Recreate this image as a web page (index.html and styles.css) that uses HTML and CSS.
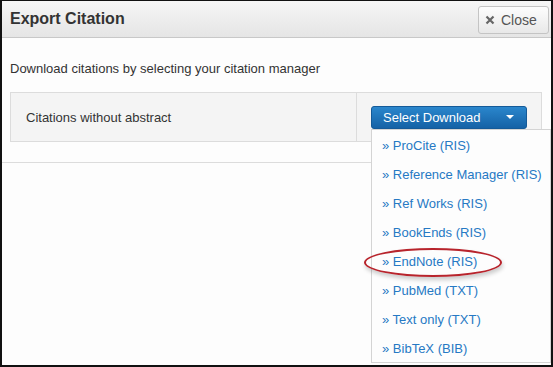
FILE: index.html
```html
<!DOCTYPE html>
<html lang="en">
<head>
    <meta charset="UTF-8">
    <title>Export Citation</title>
    <link rel="stylesheet" href="styles.css">
</head>
<body>
    <div class="modal">
        <div class="modal-header">
            <h3 class="modal-title">Export Citation</h3>
            <button class="close-btn">
                <svg class="close-icon" width="10" height="10" viewBox="0 0 10 10">
                    <path d="M1.5 1.5 L8.5 8.5 M8.5 1.5 L1.5 8.5" stroke="#666" stroke-width="2.2" fill="none"/>
                </svg>
                Close
            </button>
        </div>

        <div class="modal-body">
            <p class="intro">Download citations by selecting your citation manager</p>
            <table class="export-table">
                <tr>
                    <td class="label-cell">Citations without abstract</td>
                    <td class="action-cell">
                        <div class="dropdown">
                            <button class="btn-select">
                                Select Download
                                <span class="caret"></span>
                            </button>
                            <ul class="dropdown-menu">
                                <li><a href="#">&raquo; ProCite (RIS)</a></li>
                                <li><a href="#">&raquo; Reference Manager (RIS)</a></li>
                                <li><a href="#">&raquo; Ref Works (RIS)</a></li>
                                <li><a href="#">&raquo; BookEnds (RIS)</a></li>
                                <li class="highlighted"><a href="#">&raquo; EndNote (RIS)</a></li>
                                <li><a href="#">&raquo; PubMed (TXT)</a></li>
                                <li><a href="#">&raquo; Text only (TXT)</a></li>
                                <li><a href="#">&raquo; BibTeX (BIB)</a></li>
                            </ul>
                        </div>
                    </td>
                </tr>
            </table>
        </div>

        <div class="modal-footer"></div>
    </div>
</body>
</html>
```

FILE: styles.css
```css
* {
    margin: 0;
    padding: 0;
    box-sizing: border-box;
}

body {
    font-family: "Liberation Sans", Arial, sans-serif;
    background-color: #fdfdfd;
    color: #333;
}

.modal {
    width: 553px;
    height: 367px;
    border: 2px solid #111;
    border-top-width: 1px;
    background: #fdfdfd;
    overflow: hidden;
}

.modal-header {
    height: 37px;
    background: linear-gradient(#f6f6f6, #e5e5e5);
    border-bottom: 1px solid #c8c8c8;
    display: flex;
    justify-content: space-between;
    align-items: center;
    padding: 0 2px 0 8px;
}

.modal-title {
    font-size: 16px;
    font-weight: bold;
    color: #333;
}

.close-btn {
    display: flex;
    align-items: center;
    gap: 6px;
    height: 28px;
    width: 71px;
    padding-left: 6px;
    margin-top: 1px;
    font-family: inherit;
    font-size: 14px;
    color: #555;
    background: linear-gradient(#fdfdfd, #e8e8e8);
    border: 1px solid #c4c4c4;
    border-radius: 3px;
}

.modal-body {
    padding: 23px 9px 20px 8px;
}

.intro {
    font-size: 13px;
    line-height: 16px;
    margin-bottom: 15px;
}

.export-table {
    width: 532px;
    border-collapse: collapse;
    background: #f4f4f4;
}

.export-table td {
    border: 1px solid #dcdcdc;
    height: 49px;
    vertical-align: middle;
}

.label-cell {
    width: 346px;
    padding-left: 15px;
    font-size: 13px;
}

.action-cell {
    padding-left: 14px;
}

.dropdown {
    position: relative;
    width: 156px;
}

.btn-select {
    display: flex;
    align-items: center;
    justify-content: space-between;
    width: 156px;
    height: 23px;
    padding: 0 12px 0 11px;
    font-family: inherit;
    font-size: 13px;
    color: #fff;
    background: linear-gradient(#2a86cc, #1562a6);
    border: 1px solid #145a98;
    border-radius: 3px;
}

.caret {
    width: 0;
    height: 0;
    border-left: 4px solid transparent;
    border-right: 4px solid transparent;
    border-top: 4px solid #fff;
}

.dropdown-menu {
    position: absolute;
    top: 23px;
    left: 0;
    width: 180px;
    list-style: none;
    background: #fdfdfd;
    border: 1px solid #d4d4d4;
    padding: 1px 0 0;
    height: 234px;
}

.dropdown-menu li {
    height: 29px;
    line-height: 29px;
    padding-left: 10px;
    font-size: 13px;
    white-space: nowrap;
}

.dropdown-menu a {
    color: #2679c4;
    text-decoration: none;
}

.highlighted {
    position: relative;
}

.highlighted::after {
    content: "";
    position: absolute;
    left: -8px;
    top: 1px;
    width: 134px;
    height: 25px;
    border: 2px solid #b8242c;
    border-radius: 50%;
    box-shadow: 1px 3px 4px rgba(0, 0, 0, 0.2);
}

.modal-footer {
    border-top: 1px solid #dcdcdc;
}
```
